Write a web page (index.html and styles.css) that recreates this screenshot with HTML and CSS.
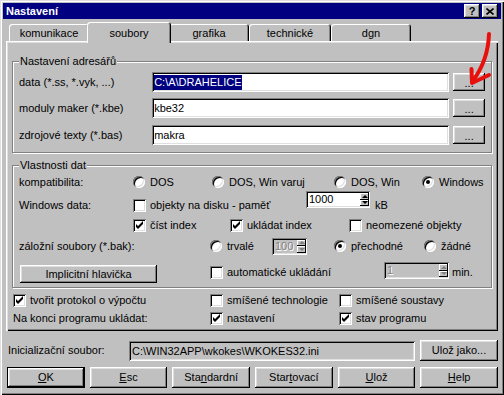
FILE: index.html
```html
<!DOCTYPE html>
<html lang="cs">

<head>
    <meta charset="UTF-8">
    <title>Nastavení</title>
    <link rel="stylesheet" href="styles.css">
</head>

<body>
    <div class="window">
        <div class="titlebar">
            <span class="title">Nastavení</span>
            <span class="tbtn help">?</span>
            <span class="tbtn close">
                <svg width="8" height="7" viewBox="0 0 8 7"><path d="M0.5 0.5 L7.5 6.5 M7.5 0.5 L0.5 6.5" stroke="#000" stroke-width="1.6"/></svg>
            </span>
        </div>

        <div class="tabs">
            <div class="tab">komunikace</div>
            <div class="tab active">soubory</div>
            <div class="tab">grafika</div>
            <div class="tab wide">technické</div>
            <div class="tab">dgn</div>
        </div>

        <div class="panel">
            <!-- adresare -->
            <div class="group g-dirs">
                <span class="group-title">Nastavení adresářů</span>
                <div class="dir-row">
                    <span class="dir-label">data (*.ss, *.vyk, ...)</span>
                    <div class="field dir-field"><span class="selected">C:\A\DRAHELICE</span></div>
                    <span class="btn dots">...</span>
                </div>
                <div class="dir-row second">
                    <span class="dir-label">moduly maker (*.kbe)</span>
                    <div class="field dir-field">kbe32</div>
                    <span class="btn dots">...</span>
                </div>
                <div class="dir-row third">
                    <span class="dir-label">zdrojové texty (*.bas)</span>
                    <div class="field dir-field">makra</div>
                    <span class="btn dots">...</span>
                </div>
            </div>

            <!-- vlastnosti dat -->
            <div class="group g-data">
                <span class="group-title">Vlastnosti dat</span>

                <div class="row r-compat">
                    <span class="lbl w-lbl">kompatibilita:</span>
                    <span class="opt w-dos"><i class="radio"></i>DOS</span>
                    <span class="opt w-dosvar"><i class="radio"></i>DOS, Win varuj</span>
                    <span class="opt w-doswin"><i class="radio"></i>DOS, Win</span>
                    <span class="opt"><i class="radio on"></i>Windows</span>
                </div>

                <div class="row r-wdata">
                    <span class="lbl w-lbl">Windows data:</span>
                    <span class="opt w-disk"><i class="check"></i>objekty na disku - paměť</span>
                    <span class="spin s-mem">
                        <span class="spin-text">1000</span>
                        <span class="spin-arrows"><span class="arr up"></span><span class="arr down"></span></span>
                    </span>
                    <span class="unit">kB</span>
                </div>

                <div class="row r-index">
                    <span class="opt w-read"><i class="check"><svg width="13" height="13" viewBox="0 0 13 13"><polygon points="3,5 5,7 10,2 10,5 5,10 3,8" fill="#000"/></svg></i>číst index</span>
                    <span class="opt w-save"><i class="check"><svg width="13" height="13" viewBox="0 0 13 13"><polygon points="3,5 5,7 10,2 10,5 5,10 3,8" fill="#000"/></svg></i>ukládat index</span>
                    <span class="opt"><i class="check"></i>neomezené objekty</span>
                </div>

                <div class="row r-bak">
                    <span class="lbl w-bak">záložní soubory (*.bak):</span>
                    <span class="opt w-perm"><i class="radio"></i>trvalé</span>
                    <span class="spin disabled s-bak">
                        <span class="spin-text">100</span>
                        <span class="spin-arrows"><span class="arr up"></span><span class="arr down"></span></span>
                    </span>
                    <span class="opt w-temp"><i class="radio on"></i>přechodné</span>
                    <span class="opt"><i class="radio"></i>žádné</span>
                </div>

                <div class="row r-auto">
                    <span class="btn header-btn">Implicitní hlavička</span>
                    <span class="opt w-auto"><i class="check"></i>automatické ukládání</span>
                    <span class="spin disabled s-min">
                        <span class="spin-text">1</span>
                        <span class="spin-arrows"><span class="arr up"></span><span class="arr down"></span></span>
                    </span>
                    <span class="unit">min.</span>
                </div>
            </div>

            <div class="row r-log">
                <span class="opt w-first"><i class="check"><svg width="13" height="13" viewBox="0 0 13 13"><polygon points="3,5 5,7 10,2 10,5 5,10 3,8" fill="#000"/></svg></i>tvořit protokol o výpočtu</span>
                <span class="opt w-second"><i class="check"></i>smíšené technologie</span>
                <span class="opt"><i class="check"></i>smíšené soustavy</span>
            </div>
            <div class="row r-end">
                <span class="lbl w-first">Na konci programu ukládat:</span>
                <span class="opt w-second"><i class="check"><svg width="13" height="13" viewBox="0 0 13 13"><polygon points="3,5 5,7 10,2 10,5 5,10 3,8" fill="#000"/></svg></i>nastavení</span>
                <span class="opt"><i class="check"><svg width="13" height="13" viewBox="0 0 13 13"><polygon points="3,5 5,7 10,2 10,5 5,10 3,8" fill="#000"/></svg></i>stav programu</span>
            </div>
        </div>

        <div class="ini-row">
            <span class="ini-label">Inicializační soubor:</span>
            <div class="field ini-field">C:\WIN32APP\wkokes\WKOKES32.ini</div>
            <span class="btn ini-btn">Ulož jako...</span>
        </div>

        <div class="buttons">
            <span class="btn default"><u>O</u>K</span>
            <span class="btn"><u>E</u>sc</span>
            <span class="btn">Sta<u>n</u>dardní</span>
            <span class="btn">Star<u>t</u>ovací</span>
            <span class="btn"><u>U</u>lož</span>
            <span class="btn"><u>H</u>elp</span>
        </div>

        <svg class="marker" width="40" height="65" viewBox="0 0 40 65">
            <path d="M29 9 C28.5 24, 25 40, 12 57" fill="none" stroke="#e8100c" stroke-width="4" stroke-linecap="round"/>
            <path d="M11.5 44 L12 58 L29 50" fill="none" stroke="#e8100c" stroke-width="4" stroke-linecap="round" stroke-linejoin="round"/>
        </svg>
    </div>
</body>

</html>
```

FILE: styles.css
```css
* {
    box-sizing: border-box;
}

body {
    margin: 0;
    background-color: #c0c0c0;
    color: #000;
    font-family: 'Liberation Sans', Arial, sans-serif;
    font-size: 11px;
    line-height: 13px;
}

.window {
    position: relative;
    width: 504px;
    height: 395px;
    padding: 3px 6px 0 3px;
    background-color: #c0c0c0;
    box-shadow: inset 1px 1px #dfdfdf, inset 2px 2px #fff, inset -1px -1px #000, inset -2px -2px #808080;
}

/* title bar */

.titlebar {
    display: flex;
    align-items: center;
    height: 16px;
    margin-right: -3px;
    padding: 0 3px 0 3px;
    background-color: #000080;
    color: #fff;
    font-weight: bold;
}

.title {
    flex: 1;
}

.tbtn {
    display: flex;
    align-items: center;
    justify-content: center;
    width: 16px;
    height: 14px;
    color: #000;
    font-size: 11px;
    background-color: #c0c0c0;
    box-shadow: inset -1px -1px #000, inset 1px 1px #fff, inset -2px -2px #808080, inset 2px 2px #dfdfdf;
}

.tbtn.help {
    margin-right: 2px;
}

/* tabs */

.tabs {
    display: flex;
    align-items: flex-end;
    height: 19px;
    margin-top: 3px;
    padding-left: 6px;
}

.tab {
    width: 80px;
    height: 17px;
    padding-top: 3px;
    text-align: center;
    border-radius: 3px 3px 0 0;
    background-color: #c0c0c0;
    box-shadow: inset 1px 1px #fff, inset -1px 0 #000, inset -2px 0 #808080;
}

.tab.wide {
    width: 82px;
}

.tab.active {
    position: relative;
    z-index: 1;
    width: 84px;
    height: 21px;
    margin: 0 -2px -2px;
    padding-top: 5px;
}

.panel {
    width: 492px;
    margin-left: 3px;
    padding: 2px 2px 6px;
    box-shadow: inset 1px 1px #fff, inset 2px 2px #dfdfdf, inset -1px -1px #000, inset -2px -2px #808080;
}

/* group boxes */

.group {
    width: 480px;
    margin-left: 4px;
    padding: 0 6px;
    border: 1px solid #808080;
    box-shadow: inset 1px 1px #fff, 1px 1px #fff;
}

.group-title {
    display: block;
    width: max-content;
    margin-top: -7px;
    padding: 0 1px;
    background-color: #c0c0c0;
}

.g-dirs {
    margin-top: 18px;
    padding-bottom: 7px;
}

.g-data {
    margin-top: 12px;
    padding-bottom: 4px;
}

.dir-row {
    display: flex;
    align-items: center;
    height: 20px;
    margin-top: 4px;
}

.dir-row.second {
    margin-top: 6px;
}

.dir-row.third {
    margin-top: 7px;
}

.dir-label {
    width: 134px;
    white-space: nowrap;
}

.dir-field {
    width: 299px;
}

.dots {
    width: 32px;
    height: 18px;
    margin-left: 4px;
    padding-top: 2px;
}

/* controls */

.field {
    height: 20px;
    padding: 0 2px;
    line-height: 20px;
    white-space: nowrap;
    background-color: #fff;
    box-shadow: inset 1px 1px #808080, inset -1px -1px #fff, inset 2px 2px #000, inset -2px -2px #dfdfdf;
}

.selected {
    display: inline-block;
    line-height: 15px;
    background-color: #000080;
    color: #fff;
}

.btn {
    display: flex;
    align-items: center;
    justify-content: center;
    background-color: #c0c0c0;
    white-space: nowrap;
    box-shadow: inset -1px -1px #000, inset 1px 1px #fff, inset -2px -2px #808080, inset 2px 2px #dfdfdf;
}

.btn.default {
    border: 1px solid #000;
}

.row {
    display: flex;
    align-items: center;
    white-space: nowrap;
}

.opt {
    display: flex;
    align-items: center;
    white-space: nowrap;
}

.radio {
    position: relative;
    flex: none;
    width: 12px;
    height: 12px;
    margin-right: 5px;
    border-radius: 50%;
    background-color: #fff;
    box-shadow: inset 1px 1px #808080, inset -1px -1px #fff, inset 2px 2px #000, inset -2px -2px #dfdfdf;
}

.radio.on::after {
    content: "";
    position: absolute;
    left: 4px;
    top: 4px;
    width: 4px;
    height: 4px;
    border-radius: 50%;
    background-color: #000;
}

.check {
    display: block;
    flex: none;
    width: 13px;
    height: 13px;
    margin-right: 4px;
    background-color: #fff;
    box-shadow: inset 1px 1px #808080, inset -1px -1px #fff, inset 2px 2px #000, inset -2px -2px #dfdfdf;
}

.check svg {
    display: block;
}

.spin {
    display: flex;
    height: 17px;
    padding: 2px 1px 2px 2px;
    background-color: #fff;
    box-shadow: inset 1px 1px #808080, inset -1px -1px #fff, inset 2px 2px #000, inset -2px -2px #dfdfdf;
}

.spin-text {
    flex: 1;
    padding-left: 1px;
    line-height: 13px;
}

.spin.disabled {
    background-color: #c0c0c0;
}

.spin.disabled .spin-text {
    color: #808080;
    text-shadow: 1px 1px #fff;
}

.spin-arrows {
    display: flex;
    flex-direction: column;
    width: 9px;
}

.arr {
    display: flex;
    align-items: center;
    justify-content: center;
    flex: 1;
    background-color: #c0c0c0;
    box-shadow: inset -1px -1px #000, inset 1px 1px #fff;
}

.arr::after {
    content: "";
    border-left: 3px solid transparent;
    border-right: 3px solid transparent;
}

.arr.up::after {
    border-bottom: 3px solid #000;
}

.arr.down::after {
    border-top: 3px solid #000;
}

.spin.disabled .arr.up::after {
    border-bottom-color: #808080;
}

.spin.disabled .arr.down::after {
    border-top-color: #808080;
}

.unit {
    margin-left: 5px;
}

/* vlastnosti dat rows */

.w-lbl {
    width: 114px;
}

.w-dos {
    width: 79px;
}

.w-dosvar {
    width: 122px;
}

.w-doswin {
    width: 88px;
}

.w-disk {
    width: 173px;
}

.w-read {
    width: 97px;
    margin-left: 114px;
}

.w-save {
    width: 119px;
}

.w-bak {
    width: 191px;
}

.w-perm {
    width: 62px;
}

.w-temp {
    width: 90px;
    margin-left: 27px;
}

.w-auto {
    width: 174px;
}

.r-compat {
    height: 14px;
    margin-top: 3px;
}

.r-wdata {
    align-items: flex-end;
    height: 21px;
    margin-top: 2px;
}

.s-mem {
    align-self: flex-start;
    width: 64px;
}

.r-index {
    height: 14px;
    margin-top: 6px;
}

.r-bak {
    height: 18px;
    margin-top: 5px;
}

.s-bak {
    width: 35px;
}

.r-auto {
    height: 21px;
    margin-top: 7px;
}

.header-btn {
    align-self: flex-end;
    width: 137px;
    height: 18px;
    margin-left: 1px;
    margin-right: 53px;
}

.s-min {
    align-self: flex-start;
    width: 65px;
}

.r-auto .unit {
    margin-left: 3px;
}

/* bottom of panel */

.r-log,
.r-end {
    height: 14px;
    padding-left: 5px;
}

.r-log {
    margin-top: 5px;
}

.r-end {
    margin-top: 4px;
}

.w-first {
    width: 197px;
}

.w-second {
    width: 129px;
}

/* dialog bottom */

.ini-row {
    display: flex;
    align-items: center;
    height: 21px;
    margin-top: 9px;
    padding-left: 5px;
}

.ini-label {
    width: 121px;
}

.ini-field {
    width: 286px;
    background-color: #c0c0c0;
    padding-left: 3px;
}

.ini-btn {
    width: 78px;
    height: 21px;
    margin-left: 5px;
}

.buttons {
    display: grid;
    grid-template-columns: repeat(6, 1fr);
    gap: 5px;
    height: 21px;
    margin: 6px 0 0 4px;
}

.marker {
    position: absolute;
    left: 460px;
    top: 25px;
}
```
